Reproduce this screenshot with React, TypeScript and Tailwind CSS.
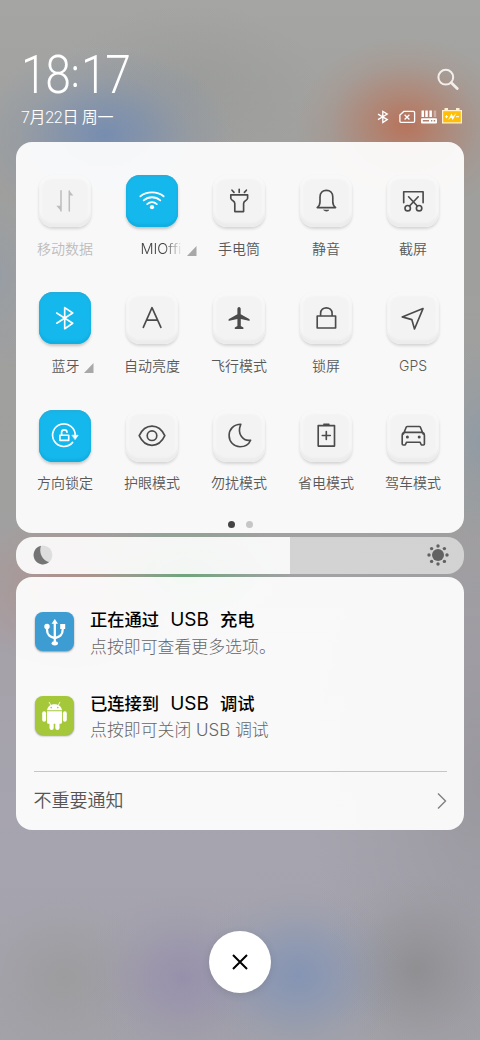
import type { ReactNode } from "react";

type Tile = {
  label: string;
  icon: ReactNode;
  state?: "on" | "off" | "disabled";
  expandable?: boolean;
  faded?: boolean;
};

const tiles: Tile[] = [
  {
    label: "移动数据",
    state: "disabled",
    icon: (
      <g strokeWidth="1.5">
        <path d="M22 15.7V36M30.3 16V36" />
        <path d="M22 36V30.8L17.3 30.8ZM30.3 15.8V20.6H34.3Z" fill="currentColor" stroke="none" />
      </g>
    ),
  },
  {
    label: "MIOffi",
    state: "on",
    expandable: true,
    faded: true,
    icon: (
      <g strokeWidth="1.8">
        <path d="M14.4 21.3C20.6 16 31.4 16 37.6 21.3M17.7 25.4C22.4 21.2 29.6 21.2 34.3 25.4M21.2 29.1C24 26.6 28 26.6 30.8 29.1" />
        <circle cx="26" cy="32.2" r="2.1" fill="currentColor" stroke="none" />
      </g>
    ),
  },
  {
    label: "手电筒",
    icon: (
      <path d="M17.8 19.8H34.6V23.4C33.8 26.3 30.6 25.4 30.6 28.4V36.6H21.8V28.4C21.8 25.4 18.6 26.3 17.8 23.4ZM19 15.2L21 17.4M26.2 14.3V17.4M33.4 15.2L31.4 17.4" />
    ),
  },
  {
    label: "静音",
    icon: (
      <g>
        <path d="M17.2 32.6C19.4 31 20 29.5 20 26.8V22C20 18 22.6 15.3 26.4 15.3S32.8 18 32.8 22V26.8C32.8 29.5 33.4 31 35.6 32.6Z" />
        <path d="M24 35.1H28.8C28.2 36.5 24.6 36.5 24 35.1Z" fill="currentColor" strokeWidth="0.6" />
      </g>
    ),
  },
  {
    label: "截屏",
    icon: (
      <g>
        <path d="M16.7 27.7V16.7H36.1V27.7M22.5 31L31.2 21.8M30.3 31L21.6 21.8" />
        <circle cx="20.7" cy="33.2" r="2.7" />
        <circle cx="32.1" cy="33.2" r="2.7" />
      </g>
    ),
  },
  {
    label: "蓝牙",
    state: "on",
    expandable: true,
    icon: <path d="M17.7 21L33.7 31.2L25.7 36.7V15.6L33.7 21L17.7 31.2" />,
  },
  { label: "自动亮度", icon: <path d="M17.3 35.3L26 15.7L34.9 35.3M20.4 28.1H31.7" /> },
  {
    label: "飞行模式",
    icon: (
      <path
        d="M26 15C27.2 15 27.7 16 27.7 17V22.2L36.2 26.9C37 27.6 36.8 29 35.9 28.7L27.8 27V34L30.4 35.6V37H21.8V35.6L24.4 34V27L16.3 28.7C15.4 29 15.2 27.6 16 26.9L24.4 22.2V17C24.4 16 25 15 26 15Z"
        fill="currentColor"
        stroke="none"
      />
    ),
  },
  { label: "锁屏", icon: <path d="M17.2 24H35.6V36H17.2ZM20.6 24V21.4C20.6 14 32.1 14 32.1 21.4V24" /> },
  { label: "GPS", icon: <path d="M36 16.6L15.2 24.9L24.8 27.6L27.5 37Z" /> },
  {
    label: "方向锁定",
    state: "on",
    icon: (
      <g>
        <path d="M33.6 32.4A11.3 11.3 0 1 1 36.2 25.6" />
        <path d="M33.2 25.2H39.2L36.2 29.4Z" fill="currentColor" strokeWidth="0.6" />
        <path d="M20.9 25.2H29.7V30.4H20.9ZM22.6 25V22.3C22.6 19 28 19 28 22.3" />
      </g>
    ),
  },
  {
    label: "护眼模式",
    icon: (
      <g>
        <path d="M13.2 25.7C19 12.9 33 12.9 38.8 25.7C33 38.5 19 38.5 13.2 25.7Z" />
        <circle cx="26" cy="25.7" r="4.8" />
      </g>
    ),
  },
  {
    label: "勿扰模式",
    icon: <path d="M27.8 14.2C20.5 14.2 16.1 19.4 16.1 25.4C16.1 31.9 21 36.7 27 36.7C32 36.7 35.9 34.2 37.6 30.2C30.6 31.5 23.5 24.5 27.8 14.2Z" />,
  },
  {
    label: "省电模式",
    icon: (
      <g>
        <path d="M18.2 15.6H34.5V36.1H18.2ZM26.3 21.5V29.5M22.3 25.5H30.3" />
        <path d="M23.9 14.3H28.9" />
      </g>
    ),
  },
  {
    label: "驾车模式",
    icon: (
      <g>
        <path d="M16.4 24L19.3 17C19.6 16.6 20 16.5 20.4 16.5H32.2C32.6 16.5 33.1 16.7 33.3 17L36.2 24M18.3 22.4H34.3C36.3 22.4 37.4 23.8 37.4 25.5V34Q37.4 35 36.4 35H34.4L33 32.2H19.6L18.2 35H16.2Q15.2 35 15.2 34V25.5C15.2 23.8 16.3 22.4 18.3 22.4Z" />
        <circle cx="20.4" cy="26.9" r="1.5" fill="currentColor" stroke="none" />
        <circle cx="32.2" cy="26.9" r="1.5" fill="currentColor" stroke="none" />
      </g>
    ),
  },
];

const tileStyles = {
  on: "bg-[#15b8ec] text-white shadow-[inset_0_-3px_2px_#10afe2,inset_0_2px_2px_#24aede,0_2px_3px_rgba(0,0,0,0.22)]",
  off: "bg-[#f3f3f3] text-[#4b4b4b] shadow-[inset_0_-4px_2px_#ececec,inset_0_4px_2px_#f8f8f8,inset_3px_0_2px_#f7f7f7,inset_-3px_0_2px_#f7f7f7,0_2px_3px_rgba(0,0,0,0.14)]",
  disabled:
    "bg-[#f3f3f3] text-[#bdbdbd] shadow-[inset_0_-4px_2px_#ececec,inset_0_4px_2px_#f8f8f8,inset_3px_0_2px_#f7f7f7,inset_-3px_0_2px_#f7f7f7,0_2px_3px_rgba(0,0,0,0.14)]",
};

const labelStyles = { on: "text-[#595959]", off: "text-[#595959]", disabled: "text-[#bcbcbc]" };

function QuickTile({ label, icon, state = "off", expandable, faded }: Tile) {
  return (
    <div className="flex flex-col items-center">
      <div className={`size-[52px] rounded-[14px] ${tileStyles[state]}`}>
        <svg
          viewBox="0 0 52 52"
          className="size-[52px]"
          fill="none"
          stroke="currentColor"
          strokeWidth="1.65"
          strokeLinecap="round"
          strokeLinejoin="round"
        >
          {icon}
        </svg>
      </div>
      <div
        className={`mt-[11.5px] flex h-5 items-center whitespace-nowrap text-[14px] font-[350] leading-5 ${labelStyles[state]} ${
          expandable ? (faded ? "pl-[33px]" : "pl-[15px]") : ""
        }`}
      >
        <span className={faded ? "w-[42px] text-[14.5px] text-[#444] [mask-image:linear-gradient(to_right,black_55%,transparent_100%)]" : ""}>
          {label}
        </span>
        {expandable && (
          <svg viewBox="0 0 10 10" className="ml-1 mt-1 size-[10px] shrink-0">
            <path d="M9.5 0V10H0Z" fill="#a8a8a8" />
          </svg>
        )}
      </div>
    </div>
  );
}

function StatusIcons() {
  return (
    <div className="flex items-center text-white">
      <svg viewBox="0 0 12 14" className="h-[14px] w-3" fill="none" stroke="currentColor" strokeWidth="1.3">
        <path d="M1 4.1L10.3 9.6L5.8 12.6V1.3L10.3 4.1L1 9.6" />
      </svg>
      <svg viewBox="0 0 17 14" className="ml-[10px] h-[14px] w-[17px]" fill="none" stroke="currentColor" strokeWidth="1.3">
        <path d="M4.8 1.4H14.5Q15.6 1.4 15.6 2.5V11.3Q15.6 12.4 14.5 12.4H2Q.9 12.4 .9 11.3V5Z" />
        <path d="M5.6 4.7L10.4 9.5M10.4 4.7L5.6 9.5" />
      </svg>
      <svg viewBox="0 0 16 14" className="ml-[5px] h-[14px] w-4" fill="currentColor">
        <path d="M.5 .5H3V7H.5ZM4.3 .5H6.8V7H4.3ZM8.4 .5H10.9V7H8.4Z" />
        <path d="M12.7 .5H15.2V7H12.7Z" opacity="0.35" />
        <path d="M1 8.2H15Q16 8.2 16 9.2V12.5Q16 13.5 15 13.5H1Q0 13.5 0 12.5V9.2Q0 8.2 1 8.2ZM1.8 10V11.5H8V10ZM10 10V11.5H11.3V10ZM12.7 10V11.5H14.2V10Z" fillRule="evenodd" />
      </svg>
      <svg viewBox="0 0 20 16" className="-mt-[2px] ml-[5px] h-4 w-5">
        <path d="M2.5 0H6V2H14V0H17.5V2H20V15.5H0V2H2.5Z" fill="#fff1cf" />
        <path d="M1.2 3.2H18.8V14.3H1.2Z" fill="#ffbf08" />
        <path d="M3 8.7H6M4.5 7.2V10.2M14 8.7H17" stroke="#fff" strokeWidth="1" />
        <path d="M6 12.3L9.5 5.5L11 8.5L14.5 4.8L10.8 12L9.2 9.4Z" fill="#fff" />
      </svg>
    </div>
  );
}

const UsbIcon = () => (
  <svg viewBox="0 0 39 39" className="size-[39px]" fill="none" stroke="#fff" strokeWidth="2.3" strokeLinecap="round">
    <path d="M19.8 11V31M12 15.5V17.5C12 23.5 15 24.5 19.8 26.2C24.6 24.5 27.7 23.5 27.7 17.5V15.5" />
    <path d="M19.8 7L23 11.7H16.6Z" fill="#fff" stroke="none" />
    <circle cx="12" cy="14.5" r="2.7" fill="#fff" stroke="none" />
    <path d="M25.2 12H30.2V17H25.2Z" fill="#fff" stroke="none" />
    <ellipse cx="19.8" cy="31.3" rx="3.2" ry="2.1" fill="#fff" stroke="none" />
  </svg>
);

const AndroidIcon = () => (
  <svg viewBox="0 0 39 39" className="size-[39px]" fill="#fff">
    <path d="M12 14.2C12.4 10.8 15.2 8.2 19.5 8.2S26.6 10.8 27 14.2Z" />
    <path d="M15.8 9.4L14.2 6.3M23.2 9.4L24.8 6.3" stroke="#fff" strokeWidth="0.8" strokeLinecap="round" />
    <path d="M12 15.2H27V26.2Q27 27.7 25.5 27.7H24.5V32A2.1 2.1 0 0 1 20.3 32V27.7H18.7V32A2.1 2.1 0 0 1 14.5 32V27.7H13.5Q12 27.7 12 26.2Z" />
    <rect x="7.2" y="15.2" width="3.9" height="10.6" rx="1.95" />
    <rect x="27.9" y="15.2" width="3.9" height="10.6" rx="1.95" />
    <circle cx="16.2" cy="11.6" r="0.8" fill="#a4c83a" />
    <circle cx="22.8" cy="11.6" r="0.8" fill="#a4c83a" />
  </svg>
);

function Notification({ icon, tone, title, text }: { icon: ReactNode; tone: string; title: ReactNode; text: string }) {
  return (
    <div className="flex h-[83.5px] items-start">
      <div className={`mt-[6px] size-[39px] shrink-0 rounded-[8px] shadow-[0_1px_2px_rgba(0,0,0,0.4)] ${tone}`}>{icon}</div>
      <div className="ml-4 whitespace-nowrap">
        <div className="flex h-[27px] items-center gap-[11px] text-[17.3px] font-medium leading-[27px] text-black">{title}</div>
        <div className="mt-[0.5px] h-[27px] text-[16.9px] font-light leading-[27px] text-[#666]">{text}</div>
      </div>
    </div>
  );
}

export default function App() {
  return (
    <div className="h-[1040px] w-[480px] overflow-hidden bg-[radial-gradient(ellipse_130px_90px_at_105px_135px,rgba(105,135,182,0.75),rgba(105,135,182,0.5)_30%,rgba(105,135,182,0.16)_65%,transparent),radial-gradient(ellipse_110px_90px_at_405px_125px,rgba(189,104,74,0.8),rgba(189,108,78,0.52)_30%,rgba(189,108,78,0.14)_68%,transparent),radial-gradient(ellipse_130px_80px_at_190px_85px,rgba(145,147,145,0.4),rgba(145,147,145,0.2)_50%,transparent),radial-gradient(ellipse_40px_90px_at_0px_275px,rgba(140,155,175,0.4),rgba(140,155,175,0.16)_50%,transparent),radial-gradient(ellipse_50px_100px_at_480px_440px,rgba(130,150,170,0.5),rgba(130,150,170,0.2)_50%,transparent),radial-gradient(ellipse_110px_80px_at_70px_590px,rgba(190,125,110,0.55),rgba(190,125,110,0.2)_50%,transparent),radial-gradient(ellipse_110px_60px_at_185px_575px,rgba(95,165,110,0.75),rgba(95,165,110,0.3)_50%,transparent),radial-gradient(ellipse_105px_90px_at_298px_975px,rgba(118,142,184,0.68),rgba(118,142,184,0.46)_32%,rgba(118,142,184,0.12)_70%,transparent),radial-gradient(ellipse_100px_90px_at_182px_978px,rgba(146,137,172,0.72),rgba(146,137,172,0.45)_32%,rgba(146,137,172,0.11)_70%,transparent),radial-gradient(ellipse_95px_95px_at_417px_970px,rgba(139,139,141,0.8),rgba(139,139,141,0.46)_35%,rgba(139,139,141,0.11)_72%,transparent),radial-gradient(ellipse_95px_85px_at_65px_978px,rgba(154,154,154,0.75),rgba(154,154,154,0.4)_40%,rgba(154,154,154,0.1)_75%,transparent),radial-gradient(ellipse_170px_350px_at_480px_780px,rgba(150,148,153,0.7),rgba(150,148,153,0.3)_50%,transparent),linear-gradient(to_bottom,#a5a6a4_0px,#9f9f9d_180px,#a0a09f_500px,#a5a2aa_660px,#a6a4af_850px,#a3a2a9_1040px)] font-['Inter','Noto_Sans_CJK_SC',sans-serif]">
      <header className="flex h-[142px] justify-between pl-[21px] pr-[18px] font-['Roboto','Noto_Sans_CJK_SC',sans-serif] text-white">
        <div>
          <div className="mt-[44px] flex h-[62px] w-[126px] origin-left scale-x-[0.855] items-baseline whitespace-nowrap text-[54px] font-light leading-[62px] tracking-[-1.5px]">
            <span>18</span>
            <span className="mx-[2px] -translate-y-[6px] text-[38px] font-normal leading-none tracking-normal">:</span>
            <span>17</span>
          </div>
          <div className="mt-px h-[22px] whitespace-nowrap text-[16px] font-[350] leading-[22px] tracking-[-0.3px]">7月22日 周一</div>
        </div>
        <div className="flex flex-col items-end pt-[68px]">
          <svg viewBox="0 0 22 22" className="mr-[3px] size-[22px]" fill="none" stroke="#f2eeec" strokeWidth="2" strokeLinecap="round">
            <circle cx="8.8" cy="9.2" r="7.4" />
            <path d="M14.3 14.8L20.2 20.5" strokeWidth="2.8" />
          </svg>
          <div className="mt-[20px]">
            <StatusIcons />
          </div>
        </div>
      </header>

      <main className="px-4">
        <section className="h-[391px] rounded-[16px] bg-[rgba(255,255,255,0.93)] pl-[5.5px] pt-[33px]">
          <div className="grid h-[344px] w-[435px] auto-rows-[117.3px] grid-cols-5">
            {tiles.map((tile) => (
              <QuickTile key={tile.label} {...tile} />
            ))}
          </div>
          <div className="flex w-[437px] justify-center gap-[11px] pt-[2px]">
            <span className="size-[7px] rounded-full bg-[#444]" />
            <span className="size-[7px] rounded-full bg-[#c6c6c6]" />
          </div>
        </section>

        <section className="mt-[4px] flex h-[37px] items-center justify-between rounded-[17px] bg-[linear-gradient(to_right,rgba(255,255,255,0.91)_274px,rgba(222,222,222,0.82)_274px)] px-4">
          <svg viewBox="0 0 20 20" className="-mt-px ml-px size-[20px]">
            <circle cx="10" cy="10" r="9.4" fill="#dedede" />
            <path d="M8 .8A9.4 9.4 0 1 0 16.1 17.1C9.5 15.2 5.5 8 8 .8Z" fill="#747474" />
          </svg>
          <svg viewBox="0 0 22 22" className="-mr-px -mt-px size-[22px]" fill="#626262">
            <circle cx="11" cy="11" r="6" />
            <circle cx="11" cy="2" r="1.7" />
            <circle cx="17.4" cy="4.6" r="1.7" />
            <circle cx="20" cy="11" r="1.7" />
            <circle cx="17.4" cy="17.4" r="1.7" />
            <circle cx="11" cy="20" r="1.7" />
            <circle cx="4.6" cy="17.4" r="1.7" />
            <circle cx="2" cy="11" r="1.7" />
            <circle cx="4.6" cy="4.6" r="1.7" />
          </svg>
        </section>

        <section className="mt-[3px] h-[252.5px] rounded-[16px] bg-[rgba(255,255,255,0.93)] px-[17.5px] pt-[29px]">
          <div className="h-[165px] pl-[1.5px]">
            <Notification
              icon={<UsbIcon />}
              tone="bg-[#3d9dd3]"
              title={
                <>
                  <span>正在通过</span>
                  <span className="text-[19px] font-normal">USB</span>
                  <span>充电</span>
                </>
              }
              text="点按即可查看更多选项。"
            />
            <Notification
              icon={<AndroidIcon />}
              tone="bg-[#a4c83a]"
              title={
                <>
                  <span>已连接到</span>
                  <span className="text-[19px] font-normal">USB</span>
                  <span>调试</span>
                </>
              }
              text="点按即可关闭 USB 调试"
            />
          </div>
          <div className="flex h-[58px] items-center justify-between border-t border-[#c6c6c6] text-[18px] font-[350] text-[#555]">
            <span>不重要通知</span>
            <svg viewBox="0 0 10 18" className="h-[18px] w-[10px]" fill="none" stroke="#808080" strokeWidth="1.4">
              <path d="M1 1.5L8.5 9L1 16.5" />
            </svg>
          </div>
        </section>
      </main>

      <footer className="mt-[101.5px] flex justify-center">
        <button className="flex size-[62px] items-center justify-center rounded-full bg-white shadow-[0_2px_8px_rgba(0,0,0,0.1)]">
          <svg viewBox="0 0 16 16" className="size-4" fill="none" stroke="#000" strokeWidth="2">
            <path d="M1 1L15 15M15 1L1 15" />
          </svg>
        </button>
      </footer>
    </div>
  );
}
